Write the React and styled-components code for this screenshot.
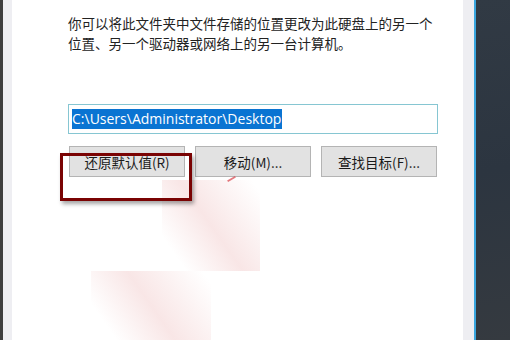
import React from 'react';
import styled, { createGlobalStyle } from 'styled-components';

const GlobalStyle = createGlobalStyle`
  html, body {
    margin: 0;
    padding: 0;
    background: #2f3741;
  }
`;

const Screen = styled.div`
  display: flex;
  width: 510px;
  height: 340px;
  overflow: hidden;
  position: relative;
`;

const DarkEdge = styled.div`
  width: ${({ $w }) => $w}px;
  flex-shrink: 0;
  background: ${({ $bg }) => $bg};
`;

const Backdrop = styled.div`
  flex: 1;
  background: linear-gradient(170deg, #313a44 0%, #2c3540 50%, #353a40 100%);
`;

const Frame = styled.div`
  width: ${({ $w }) => $w}px;
  flex-shrink: 0;
  background: #eeeef2;
  border-right: ${({ $accent }) => ($accent ? '2px solid #3aa6de' : 'none')};
`;

const Panel = styled.div`
  width: 451px;
  flex-shrink: 0;
  background: #ffffff;
  padding: 13px 0 0 56px;
  box-sizing: border-box;
  font-family: 'Noto Sans CJK SC', 'Microsoft YaHei', sans-serif;
  color: #222;
`;

const Description = styled.p`
  margin: 0;
  width: 368px;
  font-size: 13.5px;
  line-height: 20px;
`;

const PathInput = styled.div`
  margin-top: 51px;
  width: 370px;
  height: 30px;
  box-sizing: border-box;
  border: 1px solid #86c6d2;
  display: flex;
  align-items: center;
  padding-left: 3px;
  font-family: 'Open Sans', 'Noto Sans', sans-serif;
  font-size: 14px;
`;

const Selected = styled.span`
  background: #0a74d2;
  color: #ffffff;
  line-height: 20px;
  padding-right: 1px;
`;

const ButtonRow = styled.div`
  display: flex;
  gap: 10px;
  margin-top: 12px;
  margin-left: 1px;
`;

const Button = styled.div`
  width: 116px;
  height: 31px;
  box-sizing: border-box;
  background: #e2e2e2;
  border: 1px solid #b4b4b4;
  display: flex;
  align-items: center;
  justify-content: center;
  font-size: 13.5px;
  color: #1a1a1a;
`;

const Highlight = styled.div`
  position: absolute;
  left: 60px;
  top: 153px;
  width: 132px;
  height: 48px;
  box-sizing: border-box;
  border: 3px solid #7a0303;
  box-shadow: 2px 3px 4px rgba(0, 0, 0, 0.35);
`;

const Smear = styled.div`
  position: absolute;
  left: ${({ $x }) => $x}px;
  top: ${({ $y }) => $y}px;
  width: ${({ $w }) => $w}px;
  height: ${({ $h }) => $h}px;
  background: linear-gradient(
    55deg,
    rgba(255, 255, 255, 0) 15%,
    rgba(242, 205, 205, 0.5) 50%,
    rgba(255, 255, 255, 0) 95%
  );
  pointer-events: none;
`;

const Mark = styled.div`
  position: absolute;
  left: 227px;
  top: 178px;
  width: 9px;
  height: 2px;
  background: #d9434a;
  transform: rotate(-30deg);
  opacity: 0.7;
`;

export default function App() {
  return (
    <>
      <GlobalStyle />
      <Screen>
        <DarkEdge $w={3} $bg="#3e3e3e" />
        <Frame $w={9} />
        <Panel>
          <Description>
            你可以将此文件夹中文件存储的位置更改为此硬盘上的另一个位置、另一个驱动器或网络上的另一台计算机。
          </Description>
          <PathInput>
            <Selected>C:\Users\Administrator\Desktop</Selected>
          </PathInput>
          <ButtonRow>
            <Button>还原默认值(R)</Button>
            <Button>移动(M)...</Button>
            <Button>查找目标(F)...</Button>
          </ButtonRow>
        </Panel>
        <Frame $w={11} $accent />
        <Backdrop />
        <Smear $x={162} $y={180} $w={98} $h={91} />
        <Smear $x={91} $y={271} $w={120} $h={69} />
        <Mark />
        <Highlight />
      </Screen>
    </>
  );
}
